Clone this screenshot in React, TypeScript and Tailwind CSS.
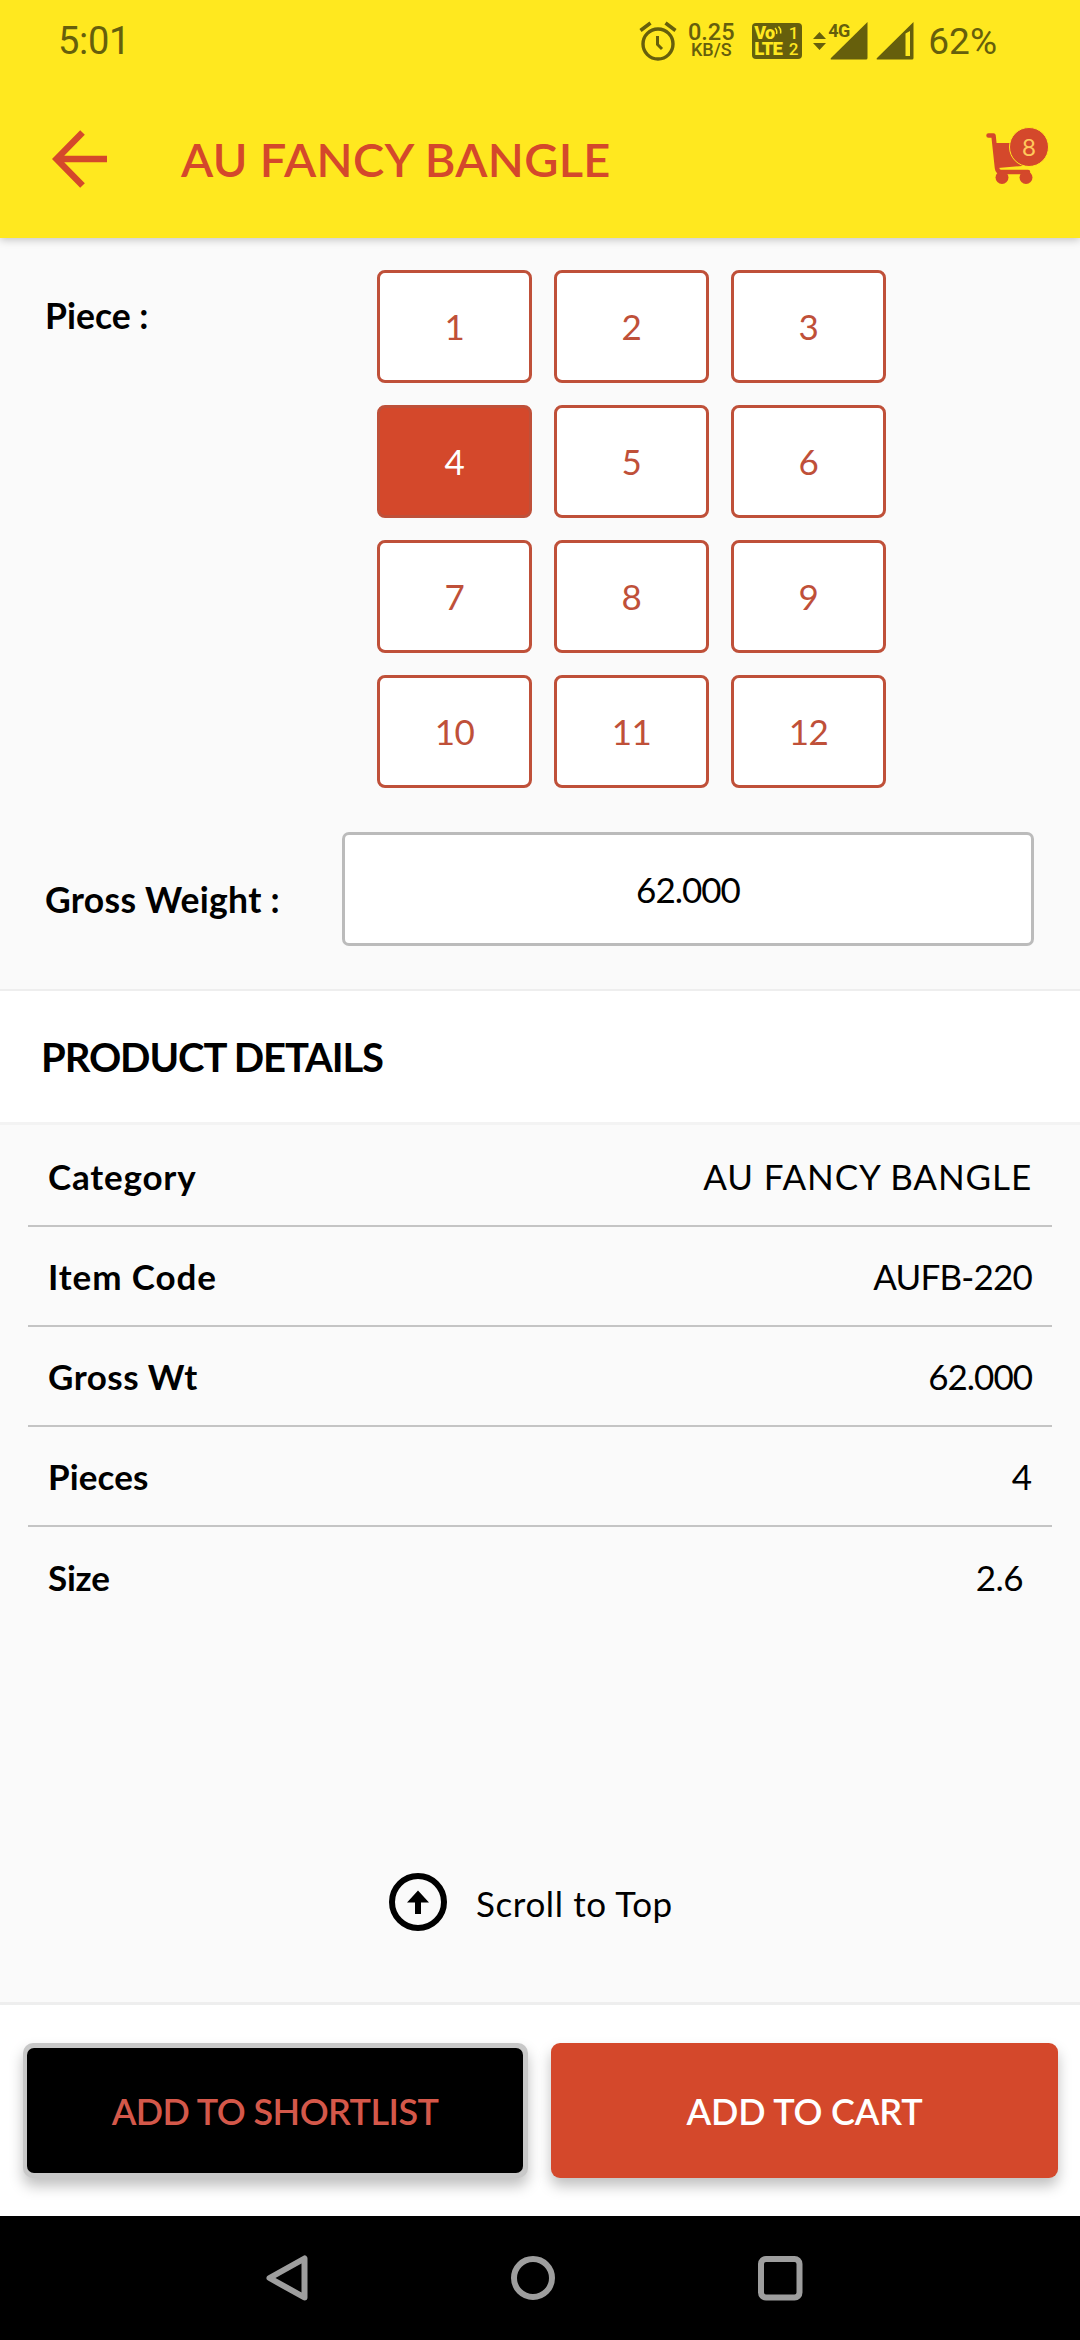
import React, { useState } from "react";

const details = [
    { label: "Category", value: "AU FANCY BANGLE", labelClass: "tracking-[0.8px]", valueClass: "tracking-[0.9px]" },
    { label: "Item Code", value: "AUFB-220", labelClass: "tracking-[0.9px]", valueClass: "tracking-[-0.8px]" },
    { label: "Gross Wt", value: "62.000", labelClass: "tracking-[0.5px]", valueClass: "tracking-[-1px]" },
    { label: "Pieces", value: "4", labelClass: "tracking-[0.1px]", valueClass: "" },
    { label: "Size", value: "2.6", labelClass: "tracking-[-0.2px]", valueClass: "tracking-[-0.5px]" },
];

const AlarmIcon = () => (
    <svg width="38" height="40" viewBox="0 0 38 40" fill="none" stroke="currentColor">
        <circle cx="19" cy="23" r="15" strokeWidth="3.4" />
        <path d="M1.5 9.5 11.5 2M36.5 9.5 26.5 2" strokeWidth="3.6" />
        <path d="M18.5 15v8.5l4.5 4.5" strokeWidth="3" />
    </svg>
);

const SignalIcon = ({ weak = false }) => (
    <svg width="38" height="38" viewBox="0 0 38 38" fill="currentColor">
        {weak ? (
            <path fillRule="evenodd" d="M37.5 0v36a1.5 1.5 0 0 1-1.5 1.5H1Q0 37 1 36ZM29.5 11.5v22.5h4.5V9Z" />
        ) : (
            <path d="M37.5 0v36a1.5 1.5 0 0 1-1.5 1.5H1Q0 37 1 36Z" />
        )}
    </svg>
);

const StatusBar = () => (
    <div className="flex h-20 items-center pt-0.5 pl-[58px] pr-[83px] font-['Roboto',sans-serif] text-[#665f0c]">
        <span className="grow text-[38px] leading-none tracking-[-0.3px]">5:01</span>
        <div className="flex items-center">
            <AlarmIcon />
            <div className="ml-[10px] flex w-[48px] flex-col items-center font-medium">
                <span className="text-[23.5px] leading-[18px]">0.25</span>
                <span className="text-[18px] leading-[18px]">KB/S</span>
            </div>
            <div className="ml-[17px] flex h-[36px] w-[50px] justify-between rounded-[4px] bg-[#665f0c] px-[2px] text-[#ffe81f]">
                <div className="flex flex-col font-black">
                    <div className="flex h-[17px] items-start">
                        <span className="text-[18px] leading-[20px] tracking-[-0.8px]">Vo</span>
                        <svg width="8" height="10" viewBox="0 0 8 10" className="mt-[3px]" fill="none" stroke="currentColor" strokeWidth="1.5">
                            <path d="M1 2q2.5 2 1.5 6M4.5 0.5q3 3 2 7" />
                        </svg>
                    </div>
                    <span className="text-[18.5px] leading-[18px] tracking-[-0.8px]">LTE</span>
                </div>
                <div className="flex flex-col pr-[2px] text-[17px] font-medium">
                    <span className="h-[17px] leading-[20px]">1</span>
                    <span className="leading-[18px]">2</span>
                </div>
            </div>
            <svg width="13" height="18" viewBox="0 0 13 18" className="ml-[11px]" fill="currentColor">
                <path d="M0 7 6.5 0 13 7ZM0 11h13L6.5 18Z" />
            </svg>
            <div className="relative ml-[4px]">
                <SignalIcon />
                <span className="absolute -left-[2px] top-0 text-[18px] font-bold leading-[17px] tracking-[-0.5px]">4G</span>
            </div>
            <div className="ml-[8px]">
                <SignalIcon weak />
            </div>
            <span className="ml-[14px] text-[37px] leading-none">62%</span>
        </div>
    </div>
);

const CartIcon = () => (
    <svg width="48" height="54" viewBox="0 0 48 54" fill="currentColor">
        <path d="M2.5 3.5h5L11 36q.5 4 4 4h27" fill="none" stroke="currentColor" strokeWidth="4.5" strokeLinecap="round" strokeLinejoin="round" />
        <path d="M8 11h34v19l-6 4-24 2Z" />
        <circle cx="16" cy="45.5" r="6.5" />
        <circle cx="40" cy="45.5" r="6.5" />
    </svg>
);

const ProductDetailPage = () => {
    const [selectedPiece, setSelectedPiece] = useState(4);

    return (
        <div className="flex h-[2340px] w-[1080px] flex-col bg-[#fafafa] font-['Lato',sans-serif] text-black">
            {/* Header */}
            <header className="z-10 h-[238px] bg-[#ffe81f] shadow-[0_2px_8px_rgba(0,0,0,0.22)]">
                <StatusBar />
                <div className="flex h-[158px] items-center pl-[52px] text-[#d4482b]">
                    <svg width="56" height="58" viewBox="0 0 56 58" fill="none" stroke="currentColor" strokeWidth="6.5">
                        <path d="M55 29H4M30.5 2.5 4.5 29 30.5 55.5" />
                    </svg>
                    <h1 className="ml-[73px] grow text-[47px] font-semibold leading-none tracking-[0.3px]">AU FANCY BANGLE</h1>
                    <div className="relative mr-[46px]">
                        <CartIcon />
                        <span className="absolute -top-[5px] left-[23px] flex h-[40px] w-[40px] items-center justify-center rounded-full border border-[#ffe81f] bg-[#d4482b] text-[24px] leading-none text-[#ffc95c]">8</span>
                    </div>
                </div>
            </header>

            {/* Piece selector */}
            <section className="flex h-[751px] flex-col pt-8">
                <div className="flex">
                    <div className="w-[377px] pl-[45px] pt-[28px] text-[35.5px] font-bold leading-[36px]">Piece :</div>
                    <div className="grid grid-cols-[155px_155px_155px] gap-[22px]">
                        {[1, 2, 3, 4, 5, 6, 7, 8, 9, 10, 11, 12].map((n) => (
                            <button
                                key={n}
                                onClick={() => setSelectedPiece(n)}
                                className={`h-[113px] rounded-[8px] border-[3px] border-[#bf5039] text-[35px] leading-none tracking-[-0.5px] ${
                                    n === selectedPiece ? "bg-[#d4482b] text-white" : "bg-white text-[#bf5039]"
                                }`}
                            >
                                {n}
                            </button>
                        ))}
                    </div>
                </div>
                <div className="mt-[44px] flex">
                    <div className="w-[342px] pl-[45px] pt-[50px] text-[35.5px] font-bold leading-[36px] tracking-[0.3px]">Gross Weight :</div>
                    <div className="flex h-[114px] w-[692px] items-center justify-center rounded-[7px] border-[3px] border-[#bbbbbb] bg-white text-[35px] tracking-[-1px]">
                        62.000
                    </div>
                </div>
            </section>

            {/* Product details */}
            <h2 className="flex h-[136px] items-center border-b-[3px] border-t-2 border-b-[#f3f3f3] border-t-[#eeeeee] bg-white pl-[41px] text-[40px] font-bold leading-none tracking-[-1.1px]">
                PRODUCT DETAILS
            </h2>
            <div className="mx-[28px] mt-[2px] divide-y-2 divide-[#c4c4c4]">
                {details.map((row) => (
                    <div key={row.label} className="flex h-[100px] items-center justify-between pl-[20px] pr-[20px] text-[35px] leading-none last:pr-[29px]">
                        <span className={`font-bold ${row.labelClass}`}>{row.label}</span>
                        <span className={row.valueClass}>{row.value}</span>
                    </div>
                ))}
            </div>

            <button className="mt-[246px] flex items-center self-start pl-[389px] text-[35px] leading-none tracking-[0.6px]">
                <svg width="58" height="58" viewBox="0 0 58 58" fill="currentColor">
                    <circle cx="29" cy="29" r="26" fill="none" stroke="currentColor" strokeWidth="6" />
                    <path d="M29 17.5 40 29.5h-8V41h-6V29.5h-8Z" />
                </svg>
                <span className="ml-[29px] pt-[2px]">Scroll to Top</span>
            </button>

            {/* Bottom actions */}
            <div className="mt-auto flex h-[214px] gap-[23px] border-t-[3px] border-[#eeeeee] bg-white pl-[23px] pt-[38px] text-[36px] font-semibold leading-none">
                <button className="h-[135px] w-[505px] rounded-[10px] bg-[#c8c8c8] p-[5px] pl-[4px] text-[#d4584a] tracking-[-0.55px] shadow-[0_8px_14px_rgba(0,0,0,0.25)]">
                    <span className="flex h-full items-center justify-center rounded-[7px] bg-black">ADD TO SHORTLIST</span>
                </button>
                <button className="h-[135px] w-[507px] rounded-[9px] bg-[#d4482b] text-white tracking-[-0.15px] shadow-[0_8px_14px_rgba(0,0,0,0.25)]">
                    ADD TO CART
                </button>
            </div>

            {/* Android navigation bar */}
            <nav className="flex h-[124px] items-center bg-black pl-[265px] text-[#9e9e9e]">
                <svg width="44" height="48" viewBox="0 0 44 48" fill="none" stroke="currentColor" strokeWidth="6" strokeLinejoin="round">
                    <path d="M39.5 4.5v39L4.5 24Z" />
                </svg>
                <svg width="46" height="46" viewBox="0 0 46 46" className="ml-[201px]" fill="none" stroke="currentColor" strokeWidth="6">
                    <circle cx="23" cy="23" r="19" />
                </svg>
                <svg width="46" height="46" viewBox="0 0 46 46" className="ml-[201px]" fill="none" stroke="currentColor" strokeWidth="6">
                    <rect x="4" y="4" width="38.5" height="38.5" rx="5" />
                </svg>
            </nav>
        </div>
    );
};

export default function App() {
    return <ProductDetailPage />;
}
